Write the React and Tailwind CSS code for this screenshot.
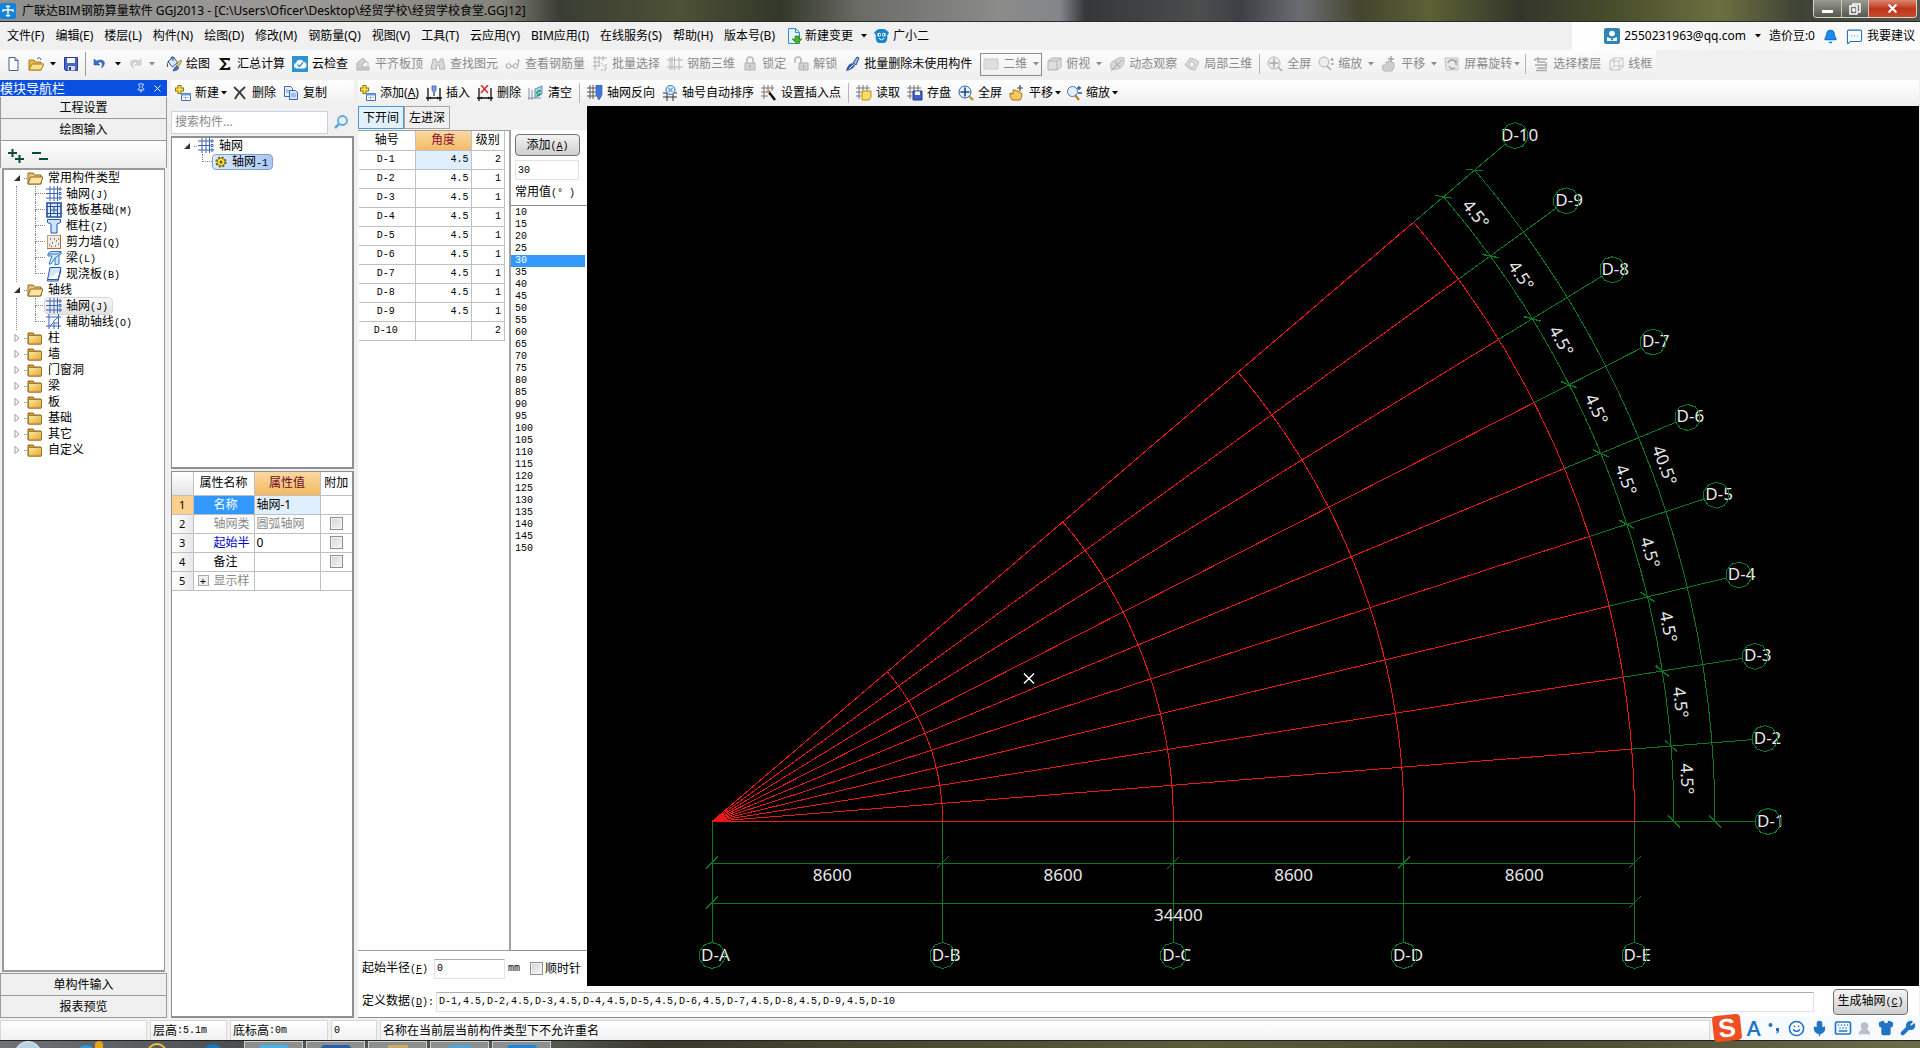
import React, { useState } from 'react';
import { Bell, Keyboard, MessageSquareMore, Mic, Pin, Shirt, Smile, UserRound, Wrench, X } from 'lucide-react';

const MONO = "font-['Liberation_Mono','Noto_Sans_CJK_SC',monospace] text-[10px]";

const folderTab = 'M1 3h5l1.500 2H14v9H1z';

const ICONS = {
    newFile: <><path d="M4 1.500h6l3 3v10H4z" fill="#fff" stroke="#3f5f93" /><path d="M10 1.500v3h3" fill="#c8d8ef" stroke="#3f5f93" /></>,
    open: <><path d="M1 4h5l1 2h6v8H1z" fill="#e6b84c" stroke="#a87a1c" /><path d="M1 14l3-6h12l-3 6z" fill="#fbe08c" stroke="#a87a1c" /><path d="M9 3q3-3 4 1" fill="none" stroke="#2f66b8" /></>,
    save: <><path d="M1.500 1.500h13v13h-12l-1-1z" fill="#4565c8" stroke="#263c8c" /><path d="M4 2h8v5H4z" fill="#f3f6ff" /><path d="M5 10h7v4.500H5z" fill="#d5ddf2" /><path d="M6 11h2v3H6z" fill="#263c8c" /></>,
    undo: <path d="M2 3v6h6L5.800 7C9 4.500 11.500 6.500 9.500 12 15 8 12.500 1.500 4.300 5z" fill="#3a6fd0" stroke="#1f4b9f" strokeWidth=".5" />,
    redo: <path d="M14 3v6H8l2.200-2C7 4.500 4.500 6.500 6.500 12 1 8 3.500 1.500 11.700 5z" fill="#d6d6d6" stroke="#b4b4b4" strokeWidth=".5" />,
    draw: <><path d="M2 5.500L7.500 1l4 5.500-5 4.500z" fill="#dbe9fb" stroke="#2a4f85" /><path d="M3 5q-2.500 2-1.500 6" fill="none" stroke="#2a4f85" /><path d="M5 3Q5 0 7 1v4" fill="none" stroke="#2a4f85" /><path d="M12 6l3-2 1 1-3 5-3 1z" fill="#e8c66a" stroke="#6a6040" strokeWidth=".6" /><path d="M7 15q1-4 4-5l2 2q-2 3-6 3z" fill="#3f78cc" stroke="#234a86" strokeWidth=".7" /></>,
    sigma: <path d="M12 4.500V3H4l4.500 5L4 13h8.300v-2" fill="none" stroke="#111" strokeWidth="1.900" />,
    cloudCheck: <><path d="M0 0h16v16H0z" fill="#2e93cf" /><path d="M4.500 12.500a2.800 2.800 0 01-.5-5.500 4 4 0 017.500-1 3.300 3.300 0 01.500 6.500z" fill="#fff" /><path d="M5.500 8.500l2 2 3.500-4" fill="none" stroke="#2e93cf" strokeWidth="1.300" /></>,
    align: <><path d="M2 10V7l6-5 3 3-4 4v2h7v3H2z" fill="#d0d0d0" stroke="#b0b0b0" /><path d="M4 12h9M9 6h4v4" fill="none" stroke="#bcbcbc" /></>,
    binoculars: <path d="M3 3h3v3h4V3h3l2 10H9.500V9h-3v4H1z" fill="#dadada" stroke="#b4b4b4" />,
    glasses: <><circle cx="3.500" cy="10" r="2.300" fill="none" stroke="#a6a6a6" /><circle cx="10.500" cy="10" r="2.300" fill="none" stroke="#a6a6a6" /><path d="M6 10h2M13 9l1-5h-2" fill="none" stroke="#a6a6a6" /></>,
    batch: <><path d="M1 2h14M1 6h7M1 10h7M3 0v14M7 0v10M11 0v5" stroke="#b2b2b2" /><path d="M9 7l5 5M14 8v6H9" stroke="#a8a8a8" fill="none" strokeDasharray="2 1" /></>,
    rebar: <path d="M0 4h16M0 11h16M3 1v13M7.500 1v13M12 1v13M5 1v13" stroke="#b4b4b4" fill="none" />,
    lock: <><path d="M5 7V4a3 3 0 016 0v3" fill="none" stroke="#b8b8b8" strokeWidth="1.600" /><path d="M3 7h10v7H3z" fill="#d3d3d3" stroke="#b0b0b0" /><path d="M8 9v3" stroke="#999" /></>,
    unlock: <><path d="M2 7V4a3 3 0 016 0v3" fill="none" stroke="#b8b8b8" strokeWidth="1.600" /><path d="M6 7h9v7H6z" fill="#d3d3d3" stroke="#b0b0b0" /><path d="M10.500 9v3" stroke="#999" /></>,
    brush: <><path d="M9 7l4-6 2 1-3 7z" fill="#8fb9ec" stroke="#274d84" /><path d="M2 15q1-6 6-8l3 3q-3 4-9 5z" fill="#2f5da8" /><path d="M5 13l4-4" stroke="#e7eef9" /></>,
    cube: <path d="M2 5l4-3h9v9l-4 3H2zM2 5h9v9M11 5l4-3" fill="#dedede" stroke="#b4b4b4" />,
    orbit: <><path d="M2 13q-2-6 4-9 6-4 9-2 1 7-4 10-5 3-9 1z" fill="#d6d6d6" stroke="#bcbcbc" /><path d="M2 15L13 4M6 5q1 4 5 6" fill="none" stroke="#a8a8a8" /></>,
    localCube: <><path d="M1 9l5-7 4 1 5 3-4 8-5-1z" fill="#dcdcdc" stroke="#b8b8b8" /><path d="M7 5l4 3-3 4-3-3z" fill="#f5f5f5" stroke="#b8b8b8" /></>,
    fullGray: <><circle cx="7" cy="7" r="6" fill="#eee" stroke="#b4b4b4" /><path d="M7 2.500v9M2.500 7h9M11 11l4 4" stroke="#a8a8a8" strokeWidth="1.500" /></>,
    zoomGray: <><circle cx="6" cy="6" r="5" fill="#eee" stroke="#b4b4b4" /><path d="M9 10l4 4M14 2v3M12.500 3.500h3M13 8h3" stroke="#a8a8a8" strokeWidth="1.500" /></>,
    handGray: <><path d="M3 15q-3-4-1-6h3V6q4-2 8 1 1 5-2 8z" fill="#cecece" stroke="#b8b8b8" /><path d="M10 0v6M7 3h6" stroke="#9c9c9c" strokeWidth="1.300" /></>,
    rotateGray: <><path d="M1 2h13v12H2z" fill="#e9e9e9" stroke="#c2c2c2" /><path d="M4 7a4 4 0 118 2M12 4v3M5 10q2 4 6 2" fill="none" stroke="#a5a5a5" strokeWidth="1.600" /></>,
    floors: <path d="M2 3h12M4 6h8M2 9h12M4 12h8M3 14.500h11M2 3v2M13 6v7M5 1v4" stroke="#a8a8a8" fill="none" strokeWidth="1.300" />,
    wire: <path d="M2 5l4-3h9v9l-4 3H2zM2 5h9v9M11 5l4-3M6 2v8h9M2 14l4-4" fill="none" stroke="#c2c2c2" />,
    addItem: <><path d="M4.500 0v9M0 4.500h9" stroke="#8f7508" strokeWidth="4" /><path d="M4.500 1v7M1 4.500h7" stroke="#ffe14d" strokeWidth="2" /><path d="M6.500 8.500h9v7h-9z" fill="#fff" stroke="#3f6fba" /><path d="M6.500 9.500h9" stroke="#6e9ade" strokeWidth="2" /><path d="M8 12.500h6M10.500 10v5" stroke="#a7c2ea" /></>,
    cross: <path d="M2 2q6 5 11 12M13 2Q6 8 3 14" fill="none" stroke="#3b3b3b" strokeWidth="1.900" />,
    copy: <><path d="M1.500 1.500h6l2 2v8h-8z" fill="#e9f1fd" stroke="#3767b1" /><path d="M6.500 5.500h6l2 2v7h-8z" fill="#d5e4fa" stroke="#3767b1" /><path d="M3 5h3M3 7h3M8 9h5M8 11h5" stroke="#6f97d4" /></>,
    insert: <><path d="M2 3v13M14 3v13M0 13h16" stroke="#111" strokeWidth="1.300" fill="none" /><path d="M6 1h4v4l-2 3-2-3z" fill="#7f9fe0" stroke="#2b4b98" strokeWidth=".7" /><path d="M8 8v3" stroke="#111" /><path d="M3 13l2-1.500v3zM13 13l-2-1.500v3z" fill="#111" /></>,
    remove: <><path d="M2 3v13M14 3v13M0 13h16" stroke="#111" strokeWidth="1.300" /><path d="M4 0l7 8M11 0L4 8" stroke="#e22525" strokeWidth="1.500" /><path d="M3 13l2-1.500v3zM13 13l-2-1.500v3z" fill="#111" /></>,
    clear: <><path d="M1 3v12M4 5v10M0 13h13" stroke="#8292a8" /><path d="M7 4l7-3v8l-7 4z" fill="#a9cdf0" stroke="#5f94c8" /><path d="M9 9q0-4 4-3M12 8q0 3-3 2" fill="none" stroke="#1b9b3b" strokeWidth="1.500" /></>,
    flip: <><path d="M0 3h14M0 7h9M0 11h9M3 0v14M6 0v14" stroke="#555" /><path d="M9 0v10l3 5 3-5V0z" fill="#3f77d6" stroke="#2453a6" strokeWidth=".6" /></>,
    sort: <><path d="M1 8h14M1 12h14M5 8v8M11 8v8" stroke="#333" /><circle cx="8.500" cy="5" r="4.500" fill="#d7ecfb" stroke="#2a78bd" /><path d="M6.500 3l4 4M10.500 3l-4 4" stroke="#2a78bd" /></>,
    setPoint: <><path d="M0 3h13M0 7h7M0 11h7M3 0v14M7 0v6M11 0v6" stroke="#777" /><path d="M7 6l7 9" stroke="#111" strokeWidth="2.500" /><path d="M6 5l2 3" stroke="#e2b03c" strokeWidth="2" /></>,
    read: <><path d="M0 3h14M0 7h7M0 11h5M3 0v14M7 0v6M11 0v6" stroke="#777" /><path d="M6 7l2-1h7v6l-2 3H6z" fill="#f9dc63" stroke="#bd911d" /></>,
    store: <><path d="M0 3h14M0 7h7M0 11h5M3 0v14M7 0v6M11 0v6" stroke="#777" /><path d="M6 6h9v9H6z" fill="#4362c6" stroke="#22388b" /><path d="M8 6.500h5V10H8z" fill="#fff" /></>,
    full: <><circle cx="7" cy="7" r="6" fill="#e5f0fd" stroke="#31609d" /><path d="M7 2.500v9M2.500 7h9" stroke="#1c4584" strokeWidth="1.600" /><path d="M11.500 11.500l3.500 3.500" stroke="#c78a2b" strokeWidth="2.200" /></>,
    hand: <><path d="M3 15q-3-4-2-7l3 1V5q2-1 3 1 2-1 3 1 2 0 3 2 0 4-2 6z" fill="#f4c95d" stroke="#a4741b" /><path d="M11 0v6M8 3h6" stroke="#3d4754" strokeWidth="1.200" /></>,
    zoom: <><circle cx="6.500" cy="6.500" r="5" fill="#e5f0fd" stroke="#4a79b4" /><path d="M9 10l4 5" stroke="#b98131" strokeWidth="2.200" /><path d="M13 1v4M11 3h4M12 8h4" stroke="#2157a4" strokeWidth="1.300" /></>,
    change: <><path d="M2.500.500h7l4 4v11h-11z" fill="#e9f5fe" stroke="#3489c9" /><path d="M9.500.500v4h4" fill="none" stroke="#3489c9" /><path d="M9 8h4v3h3l-5 5-5-5h3z" fill="#44b622" stroke="#267d0c" strokeWidth=".6" /></>,
    mascot: <><path d="M0 4q4-5 8-4 4-1 8 4l-2 3q1 6-3 8H5Q1 13 2 7z" fill="#1687cb" /><circle cx="5.500" cy="6" r="2" fill="#fff" /><circle cx="10.500" cy="6" r="2" fill="#fff" /><circle cx="6" cy="6" r=".8" fill="#123" /><circle cx="10" cy="6" r=".8" fill="#123" /><path d="M5 10q3 3 6 0" fill="none" stroke="#fff" /></>,
    user: <><rect width="16" height="16" rx="2" fill="#2e86b8" /><circle cx="8" cy="5.500" r="2.800" fill="#fff" /><path d="M3 13V9l5 2 5-2v4z" fill="#fff" /><path d="M6.500 11h3L8 13z" fill="#2e86b8" /></>,
    folder: <><path d={folderTab} fill="#d6a02e" stroke="#8b6720" /><path d="M1.500 5.500h13v8.500h-13z" fill="url(#gold)" stroke="#a67a22" /></>,
    folderOpen: <><path d={folderTab} fill="#eac771" stroke="#8b6720" /><path d="M1 14l2.500-7H16l-2.500 7z" fill="#fbe3a0" stroke="#8b6720" /></>,
    grid: <><path d="M4 0v15M8 0v15M0 3h12M0 7.500h12M0 12h12M11.500 0v15" stroke="#3a62b3" fill="none" /><path d="M13 2h2v2h-2zM13 6.500h2v2h-2zM13 11h2v2h-2z" fill="none" stroke="#3a62b3" /></>,
    raft: <><path d="M1 1h14v14H1z" fill="#dce9fb" stroke="#234f98" strokeWidth="1.600" /><path d="M4.500 1v14M11.500 1v14M1 4.500h14M1 11.500h14M8 4v8M4 8h8" stroke="#234f98" /></>,
    column: <path d="M1.500 1.500h13v3L11 6v9H5V6L1.500 4.500z" fill="#cfe2fb" stroke="#2358b5" />,
    wall: <><path d="M1.500 1.500h13v13h-13z" fill="#efeae4" stroke="#c49b7c" /><path d="M14.500 1v14M1 14.500h14" stroke="#c9632b" /><path d="M3 11h1M6 9h1M9 12h1M12 10h1M5 12.500h1M10 7h1M4 5h1M8 5h1M12 5h1" stroke="#333" /></>,
    beam: <><path d="M2 3.500L5 1.500h10v2.500l-2 1v9L9 15V8L5 14H3l3-8H2z" fill="#cfe7fb" stroke="#2b7ac4" /><path d="M2 4h9l4-2M9 8l4-3" fill="none" stroke="#2b7ac4" /></>,
    slab: <path d="M4 1.500h11l-3 12H1.500z M1.500 13.500v1.500H12l3-11" fill="#d4e5fb" stroke="#2358b5" />,
    auxAxis: <path d="M3 0v15M12.500 0v15M0 3h15M0 12h15M7 8l5-5M8 15V9h4M4 12l4-4" stroke="#3a62b3" fill="none" />,
    gear: <><circle cx="8" cy="8" r="6" fill="none" stroke="#6f6200" strokeWidth="3" strokeDasharray="2.700 2" /><circle cx="8" cy="8" r="5" fill="#ffe93a" stroke="#7b6a00" /><circle cx="8" cy="8" r="2" fill="#3d3500" /><circle cx="8" cy="8" r=".8" fill="#ffe93a" /></>,
    search: <><circle cx="9.500" cy="6.500" r="4.500" fill="#e6f5fd" stroke="#5ba9dd" strokeWidth="1.800" /><path d="M6 10l-4 4" stroke="#5ba9dd" strokeWidth="2.500" /></>,
    plane: <path d="M1 3h14v10H1z" fill="#dedede" stroke="#cacaca" />,
};

function Icon({ name, className = 'size-4' }) {
    return <svg viewBox="0 0 16 16" className={`shrink-0 ${className}`} aria-hidden="true">{ICONS[name]}</svg>;
}

function Caret({ className = '' }) {
    return <svg viewBox="0 0 6 4" className={`w-[6px] h-1 shrink-0 fill-current ${className}`} aria-hidden="true"><path d="M0 0h6L3 3.500z" /></svg>;
}

function Tool({ icon, label, off, menu, tight, hotkey }) {
    return (
        <button className={`flex items-center gap-1 whitespace-nowrap ${off ? 'text-[#8a8a8a]' : 'text-black'}`}>
            <Icon name={icon} />
            <span>{label}{hotkey && <>(<u>{hotkey}</u>)</>}</span>
            {menu && <Caret className={tight ? '-ml-[2px] -mr-[2px]' : 'ml-[2px]'} />}
        </button>
    );
}

function Divider() {
    return <span className="w-px h-5 bg-[#b5b5b5] shrink-0" />;
}

const MENUS = ['文件(F)', '编辑(E)', '楼层(L)', '构件(N)', '绘图(D)', '修改(M)', '钢筋量(Q)', '视图(V)', '工具(T)', '云应用(Y)', 'BIM应用(I)', '在线服务(S)', '帮助(H)', '版本号(B)'];

function TitleBar() {
    return (
        <header className="flex justify-between h-[22px] shrink-0 border-b border-[#2a2a2a] bg-[linear-gradient(90deg,#8f8f8d_0px,#9b9a96_300px,#84837c_500px,#3a3d33_560px,#4d5136_680px,#33372a_780px,#6b6c66_860px,#8b8b8a_1000px,#84858a_1060px,#35373b_1085px,#4c4d4d_1200px,#3e4046_1240px,#6c6d73_1300px,#44452e_1360px,#5c6136_1430px,#33362a_1520px,#4a4f2d_1620px,#6c7040_1720px,#3f4237_1800px,#55584a_1920px)]">
            <div className="flex items-center gap-[6px] min-w-0">
                <svg viewBox="0 0 16 16" className="size-4 shrink-0"><rect width="16" height="16" rx="2" fill="#1283d8" /><path d="M8 3v10M3 9V7h10v2M6 4q2-2 4 0M6 12q2 2 4 0" fill="none" stroke="#fff" strokeWidth="1.300" /></svg>
                <h1 className="truncate">广联达BIM钢筋算量软件 GGJ2013 - [C:\Users\Oficer\Desktop\经贸学校\经贸学校食堂.GGJ12]</h1>
            </div>
            <div className="flex h-[18px] mr-[3px] shrink-0 border border-t-0 border-[#d5d5cf] rounded-b-sm overflow-hidden">
                <button aria-label="最小化" className="w-7 flex items-end justify-center pb-1 bg-gradient-to-b from-[#9a9b92] to-[#55584d] border-r border-[#c8c8c0]"><span className="w-[11px] h-[3px] bg-white" /></button>
                <button aria-label="还原" className="w-[27px] flex items-center justify-center bg-gradient-to-b from-[#9a9b92] to-[#55584d] border-r border-[#c8c8c0]">
                    <svg viewBox="0 0 12 12" className="size-3" fill="none" stroke="#fff" strokeWidth="1.500"><path d="M4 3V1h7v8H9M1 3h7v8H1zM4 6h1.500v2H4z" /></svg>
                </button>
                <button aria-label="关闭" className="w-[47px] flex items-center justify-center bg-gradient-to-b from-[#d9866f] via-[#bd3519] to-[#c8492c]"><X size={13} strokeWidth={4} color="#fff" /></button>
            </div>
        </header>
    );
}

function MenuBar() {
    return (
        <nav className="flex items-center justify-between h-7 shrink-0 pl-[7px] bg-[#f0f0f0]">
            <div className="flex items-center gap-[11px] whitespace-nowrap">
                {MENUS.map(m => <button key={m}>{m}</button>)}
                <button className="flex items-center gap-[3px]"><Icon name="change" />新建变更<Caret className="ml-[5px]" /></button>
                <button className="flex items-center gap-1 -ml-1"><Icon name="mascot" className="size-[15px]" />广小二</button>
            </div>
            <div className="flex items-center h-full pl-8 pr-[5px] whitespace-nowrap bg-gradient-to-r from-white via-[#f3f3f3] to-white">
                <button className="flex items-center gap-1"><Icon name="user" />2550231963@qq.com<Caret className="ml-[5px]" /></button>
                <span className="ml-2">造价豆:0</span>
                <button aria-label="通知" className="ml-2"><Bell size={15} fill="#1b8cf0" color="#1476d0" /></button>
                <button className="ml-2 flex items-center gap-1"><MessageSquareMore size={17} color="#1f72bd" strokeWidth={1.5} />我要建议</button>
            </div>
        </nav>
    );
}

function MainToolbar() {
    return (
        <div className="flex h-[30px] shrink-0 bg-[#f0f0f0]">
            <div className="flex items-center gap-[7px] pl-[5px] pr-1 h-[28px] bg-gradient-to-b from-[#fdfdfd] to-[#eee]">
                <div className="flex items-center w-[154px] shrink-0">
                    <button aria-label="新建工程"><Icon name="newFile" /></button>
                    <button aria-label="打开" className="ml-[7px] flex items-center gap-[6px]"><Icon name="open" /><Caret /></button>
                    <button aria-label="保存" className="ml-[7px]"><Icon name="save" /></button>
                    <span className="w-px h-6 mx-[6px] bg-[#9a9a9a]" />
                    <button aria-label="撤销" className="flex items-center gap-[7px]"><Icon name="undo" /><Caret /></button>
                    <button aria-label="恢复" className="ml-[6px] flex items-center gap-[6px] text-[#8a8a8a]"><Icon name="redo" /><Caret /></button>
                </div>
                <Tool icon="draw" label="绘图" />
                <Tool icon="sigma" label="汇总计算" />
                <Tool icon="cloudCheck" label="云检查" />
                <Tool icon="align" label="平齐板顶" off />
                <Tool icon="binoculars" label="查找图元" off />
                <Tool icon="glasses" label="查看钢筋量" off />
                <Tool icon="batch" label="批量选择" off />
                <Tool icon="rebar" label="钢筋三维" off />
                <Tool icon="lock" label="锁定" off />
                <Tool icon="unlock" label="解锁" off />
                <Tool icon="brush" label="批量删除未使用构件" />
                <label className="flex items-center gap-1 w-[62px] h-[23px] ml-px px-[2px] border border-[#8c8c8c] text-[#8a8a8a]">
                    <Icon name="plane" />
                    <select aria-label="视图模式" className="appearance-none w-[26px] outline-none"><option>二维</option><option>三维</option></select>
                    <Caret />
                </label>
                <div className="flex items-center gap-[7px] -ml-[3px]">
                    <Tool icon="cube" label="俯视" off menu />
                    <Tool icon="orbit" label="动态观察" off />
                    <Tool icon="localCube" label="局部三维" off />
                    <Divider />
                    <Tool icon="fullGray" label="全屏" off />
                    <Tool icon="zoomGray" label="缩放" off menu />
                    <Tool icon="handGray" label="平移" off menu />
                    <Tool icon="rotateGray" label="屏幕旋转" off menu tight />
                    <Divider />
                    <Tool icon="floors" label="选择楼层" off />
                    <Tool icon="wire" label="线框" off />
                </div>
            </div>
        </div>
    );
}

const TREE = [
    {
        label: '常用构件类型', children: [
            { icon: 'grid', label: '轴网', key: 'J' },
            { icon: 'raft', label: '筏板基础', key: 'M' },
            { icon: 'column', label: '框柱', key: 'Z' },
            { icon: 'wall', label: '剪力墙', key: 'Q' },
            { icon: 'beam', label: '梁', key: 'L' },
            { icon: 'slab', label: '现浇板', key: 'B' },
        ],
    },
    {
        label: '轴线', children: [
            { icon: 'grid', label: '轴网', key: 'J', selected: true },
            { icon: 'auxAxis', label: '辅助轴线', key: 'O' },
        ],
    },
    ...['柱', '墙', '门窗洞', '梁', '板', '基础', '其它', '自定义'].map(label => ({ label })),
];

function Elbow({ last }) {
    return (
        <span className="flex flex-col w-[10px] h-4 shrink-0">
            <span className="h-2 border-l border-b border-dotted border-[#888]" />
            {!last && <span className="h-2 border-l border-dotted border-[#888]" />}
        </span>
    );
}

function Arrow({ open }) {
    return (
        <svg viewBox="0 0 6 8" className="w-[6px] h-2 shrink-0">
            {open ? <path d="M6 1v6H0z" fill="#333" /> : <path d="M1 .500l4 3.500-4 3.500z" fill="#fff" stroke="#999" />}
        </svg>
    );
}

function NavButton({ children }) {
    return <button className="h-[22px] shrink-0 border border-t-0 border-[#9a9a9a] bg-[#f0f0f0] leading-4">{children}</button>;
}

function ModulePanel() {
    return (
        <aside className="flex flex-col w-[167px] shrink-0">
            <div className="flex items-center h-4 shrink-0 mb-px bg-[#0a50e0] text-white">
                <h2 className="flex-1 text-[13px] leading-4">模块导航栏</h2>
                <button aria-label="固定" className="mr-[6px]"><Pin size={10} /></button>
                <button aria-label="关闭面板" className="mr-1"><X size={11} /></button>
            </div>
            <NavButton>工程设置</NavButton>
            <NavButton>绘图输入</NavButton>
            <div className="flex items-center gap-2 h-[27px] shrink-0 pl-[7px] pt-[3px] bg-gradient-to-b from-white to-[#ececec] border-x border-[#9a9a9a]">
                <button aria-label="全部展开"><svg viewBox="0 0 16 16" className="size-4"><path d="M0 5h9M4.500 1v8M7 11h9M11.500 7v8" stroke="#0d4a40" strokeWidth="2" /></svg></button>
                <button aria-label="全部折叠"><svg viewBox="0 0 16 16" className="size-4"><path d="M0 5h9M7 11h9" stroke="#0d4a40" strokeWidth="2" /></svg></button>
            </div>
            <ul className="flex-1 mx-[2px] pl-[10px] bg-white border-2 border-[#9a9a9a] border-r overflow-hidden">
                {TREE.map(group => (
                    <li key={group.label}>
                        <button className="flex items-center h-4 whitespace-nowrap">
                            <Arrow open={!!group.children} />
                            <span className="w-[3px] ml-1 border-t border-dotted border-[#888]" />
                            <Icon name={group.children ? 'folderOpen' : 'folder'} />
                            <span className="ml-[5px]">{group.label}</span>
                        </button>
                        {group.children && (
                            <ul className="ml-[2px] border-l border-dotted border-[#888]">
                                {group.children.map((item, i) => (
                                    <li key={item.label} className="flex items-center h-4 pl-[18px]">
                                        <Elbow last={i === group.children.length - 1} />
                                        <button className={`flex items-center gap-[4px] h-4 pl-px pr-1 whitespace-nowrap ${item.selected ? 'bg-gradient-to-b from-[#fafafa] to-[#e2e2e2] rounded-sm outline-1 outline-[#d6d6d6]' : ''}`}>
                                            <Icon name={item.icon} />
                                            <span>{item.label}<span className={MONO}>({item.key})</span></span>
                                        </button>
                                    </li>
                                ))}
                            </ul>
                        )}
                    </li>
                ))}
            </ul>
            <div className="flex flex-col shrink-0 mt-px border-t border-[#9a9a9a]">
                <NavButton>单构件输入</NavButton>
                <NavButton>报表预览</NavButton>
            </div>
        </aside>
    );
}

const PROPERTIES = [
    { name: '名称', value: '轴网-1' },
    { name: '轴网类', value: '圆弧轴网', tone: 'text-[#8a8a8a]', extra: true },
    { name: '起始半', value: '0', tone: 'text-[#0000c8]', extra: true },
    { name: '备注', value: '', extra: true },
    { name: '显示样', value: '', tone: 'text-[#8a8a8a]', expand: true },
];

const CHECKBOX = 'appearance-none block size-[13px] shrink-0 border border-[#8f8f8f] bg-gradient-to-br from-[#d4d4d4] to-[#f6f6f6] shadow-[inset_0_0_0_1px_#f4f4f4] checked:bg-[#3399ff]';

function ComponentPanel() {
    return (
        <section className="flex flex-col w-[183px] shrink-0">
            <div className="flex items-center gap-[7px] h-[26px] shrink-0 pl-1 bg-gradient-to-b from-white to-[#eee]">
                <Tool icon="addItem" label="新建" menu tight />
                <Tool icon="cross" label="删除" />
                <Tool icon="copy" label="复制" />
            </div>
            <div className="flex items-center h-[30px] shrink-0 pt-[2px]">
                <input aria-label="搜索构件" placeholder="搜索构件..." className="w-[157px] h-[23px] pl-[3px] pb-[2px] bg-white border border-[#ccd3e0] outline-none placeholder:text-[#8a8a8a]" />
                <button aria-label="搜索" className="ml-[5px]"><Icon name="search" /></button>
            </div>
            <ul className="h-[333px] shrink-0 pl-3 bg-white border-2 border-[#8f8f8f] border-l">
                <li className="flex items-center h-4">
                    <Arrow open />
                    <span className="w-[3px] ml-1 mr-px border-t border-dotted border-[#888]" />
                    <Icon name="grid" />
                    <span className="ml-[5px]">轴网</span>
                </li>
                <li className="flex items-center h-4 pl-[18px]">
                    <Elbow last />
                    <button className="flex items-center gap-[5px] h-4 pl-[2px] pr-1 rounded-sm border border-[#7da2ce] bg-gradient-to-r from-[#dcebfc] to-[#a9c8f5]">
                        <Icon name="gear" className="size-3" /><span>轴网<span className={MONO}>-1</span></span>
                    </button>
                </li>
            </ul>
            <div className="flex-1 mt-[2px] bg-white border border-[#8f8f8f] border-r-2 border-b-2">
                <table className="w-full table-fixed border-collapse leading-4">
                    <colgroup><col className="w-[21px]" /><col className="w-[61px]" /><col className="w-[66px]" /><col /></colgroup>
                    <thead>
                        <tr className="h-[23px]">
                            <th className="border border-t-0 border-l-0 border-[#c0c0c0] bg-gradient-to-b from-white to-[#e4e4e4]" />
                            <th className="p-0 font-normal border border-t-0 border-[#c0c0c0]">属性名称</th>
                            <th className="p-0 font-normal border border-t-0 border-[#c0c0c0] text-[#6b0a2a] bg-gradient-to-b from-[#f9d9a0] to-[#f2b95e]">属性值</th>
                            <th className="p-0 font-normal border border-t-0 border-r-0 border-[#c0c0c0]">附加</th>
                        </tr>
                    </thead>
                    <tbody>
                        {PROPERTIES.map((p, i) => (
                            <tr key={p.name} className="h-[19px]">
                                <td className={`text-center text-[11px] border border-l-0 border-[#c0c0c0] ${i === 0 ? 'bg-[#fbd08c]' : 'bg-gradient-to-r from-white to-[#e8e8e8]'}`}>{i + 1}</td>
                                <td className={`border border-[#c0c0c0] whitespace-nowrap ${i === 0 ? 'bg-[#3399ff] text-white' : p.tone || ''}`}>
                                    <span className="flex items-center">
                                        <span className="w-5 shrink-0 flex justify-center">
                                            {p.expand && <button aria-label="展开" className="flex items-center justify-center size-[11px] mr-px bg-[#f0f0f0] border border-[#aaa] text-black text-[11px] leading-none">+</button>}
                                        </span>{p.name}
                                    </span>
                                </td>
                                <td className={`pl-[2px] border border-[#c0c0c0] whitespace-nowrap ${i === 0 ? 'bg-[#e0effd]' : ''} ${i === 1 ? 'text-[#8a8a8a]' : ''}`}>{p.value}</td>
                                <td className="border border-r-0 border-[#c0c0c0]">
                                    {p.extra && <input type="checkbox" aria-label={`${p.name}附加`} className={`${CHECKBOX} mx-auto`} />}
                                </td>
                            </tr>
                        ))}
                    </tbody>
                </table>
            </div>
        </section>
    );
}

const AXES = Array.from({ length: 10 }, (_, i) => ({
    name: `D-${i + 1}`,
    angle: i < 9 ? '4.5' : '',
    level: i === 0 || i === 9 ? 2 : 1,
}));

const COMMON = [...Array.from({ length: 28 }, (_, i) => 10 + i * 5), 150];

function AxisTable() {
    const [tab, setTab] = useState('下开间');
    return (
        <div className="flex flex-col w-[153px] shrink-0">
            <div className="flex h-6 shrink-0">
                {['下开间', '左进深'].map(t => (
                    <button
                        key={t}
                        onClick={() => setTab(t)}
                        className={`w-[46px] h-[23px] border ${t === tab ? 'border-[#4a98d8] bg-[#e3f1fd]' : 'border-[#a5a5a5] bg-[#f0f0f0]'}`}
                    >{t}</button>
                ))}
            </div>
            <div className="flex-1 bg-white border-y border-r-2 border-[#a0a0a0] pl-px">
                <table className="w-[146px] table-fixed border-collapse leading-4">
                    <colgroup><col className="w-[56px]" /><col className="w-[56px]" /><col /></colgroup>
                    <thead>
                        <tr className="h-[19px]">
                            <th className="p-0 font-normal border-b border-r border-[#c0c0c0]">轴号</th>
                            <th className="p-0 font-normal border-b border-r border-[#c0c0c0] text-[#8a1030] bg-gradient-to-b from-[#f9d9a0] to-[#f2bb66]">角度</th>
                            <th className="p-0 font-normal border-b border-r border-[#c0c0c0]">级别</th>
                        </tr>
                    </thead>
                    <tbody className={MONO}>
                        {AXES.map((a, i) => (
                            <tr key={a.name} className="h-[19px]">
                                <td className="p-0 pr-[2px] text-center border-b border-r border-[#c0c0c0]">{a.name}</td>
                                <td className={`p-0 pr-[2px] text-right border-b border-r border-[#c0c0c0] ${i === 0 ? 'bg-[#e0effd]' : ''}`}>{a.angle}</td>
                                <td className="p-0 pr-[3px] text-right border-b border-r border-[#c0c0c0]">{a.level}</td>
                            </tr>
                        ))}
                    </tbody>
                </table>
            </div>
        </div>
    );
}

const PUSH = 'border border-[#707070] rounded-sm bg-gradient-to-b from-[#f4f4f4] to-[#cfcfcf] whitespace-nowrap';

function CommonValues() {
    const [value, setValue] = useState(30);
    return (
        <div className="flex flex-col flex-1 pt-6">
            <div className="flex flex-col h-[75px] shrink-0 pl-1 pt-1 bg-white">
                <button className={`w-[65px] h-[22px] shrink-0 ${PUSH}`}>添加<span className={MONO}>(<u>A</u>)</span></button>
                <input aria-label="角度值" value={value} onChange={e => setValue(e.target.value)} className={`w-[64px] h-5 mt-1 pl-[2px] shrink-0 border border-[#e2e3ea] outline-none ${MONO}`} />
                <span className="mt-1 leading-4">常用值<span className={MONO}>(° )</span></span>
            </div>
            <ul role="listbox" aria-label="常用值" className={`flex-1 pt-px bg-white border-y border-[#8f8f8f] leading-3 ${MONO}`}>
                {COMMON.map(v => (
                    <li
                        key={v}
                        role="option"
                        aria-selected={v === Number(value)}
                        onClick={() => setValue(v)}
                        className={`h-3 mr-[2px] pl-1 leading-3 ${v === Number(value) ? 'bg-[#3399ff] text-white' : ''}`}
                    >{v}</li>
                ))}
            </ul>
        </div>
    );
}

// canvas geometry, 8600mm per bay
const OX = 125;
const OY = 715;
const BAY = 230.65;
const STEP = 4.5;
const R_RED = BAY * 4;
const R_DIM1 = 962;
const R_DIM2 = 1003;
const R_END = 1044;
const R_BUBBLE = 1056;
const GREEN = '#0c7a22';
const RED = '#ee1717';

const polar = (r, deg) => {
    const a = (deg * Math.PI) / 180;
    return [OX + r * Math.cos(a), OY - r * Math.sin(a)];
};

function Arc({ r, color }) {
    const [x, y] = polar(r, STEP * 9);
    return <path d={`M${OX + r} ${OY}A${r} ${r} 0 0 0 ${x} ${y}`} fill="none" stroke={color} />;
}

function Radial({ from, to, deg, color }) {
    const [x1, y1] = polar(from, deg);
    const [x2, y2] = polar(to, deg);
    return <line x1={x1} y1={y1} x2={x2} y2={y2} stroke={color} />;
}

function Bubble({ x, y, label }) {
    const points = Array.from({ length: 10 }, (_, i) => {
        const a = (i * 36 * Math.PI) / 180;
        return `${x + 13 * Math.sin(a)},${y - 13 * Math.cos(a)}`;
    }).join(' ');
    return (
        <g>
            <text x={label.length > 3 ? x - 14 : x - 11} y={y + 5} fill="#e8e8e8">{label}</text>
            <polygon points={points} fill="none" stroke={GREEN} shapeRendering="crispEdges" />
        </g>
    );
}

function ArcTick({ r, deg, skew = 0 }) {
    const [x, y] = polar(r, deg);
    return <path d="M-6 -6L6 6" transform={`translate(${x} ${y}) rotate(${-deg + skew})`} stroke={GREEN} />;
}

function ArcText({ r, deg, children }) {
    const [x, y] = polar(r, deg);
    return <text transform={`translate(${x} ${y}) rotate(${90 - deg})`} textAnchor="middle" fill="#e8e8e8">{children}</text>;
}

function AxisCanvas() {
    const lines = AXES.map((_, i) => i * STEP);
    const bays = [0, 1, 2, 3, 4];
    return (
        <div className="flex-1 min-w-0 bg-black">
            <svg viewBox="0 0 1332 879" className="size-full font-['Noto_Sans',sans-serif] text-[17px]" role="img" aria-label="圆弧轴网">
                <g shapeRendering="crispEdges">
                    {lines.map(d => <Radial key={d} from={R_RED} to={R_END} deg={d} color={GREEN} />)}
                    {bays.map(b => <line key={b} x1={OX + b * BAY} x2={OX + b * BAY} y1={OY} y2={836} stroke={GREEN} />)}
                    <path d={`M${OX} 756.500H${OX + R_RED}M${OX} 796.500H${OX + R_RED}`} stroke={GREEN} />
                    {bays.map(b => <path key={b} d="M-6 6L6 -6" transform={`translate(${OX + b * BAY} 756)`} stroke={GREEN} />)}
                    {[0, 4].map(b => <path key={b} d="M-6 6L6 -6" transform={`translate(${OX + b * BAY} 796)`} stroke={GREEN} />)}
                    <Arc r={R_DIM1} color={GREEN} />
                    <Arc r={R_DIM2} color={GREEN} />
                    {lines.map((d, i) => (
                        <g key={d}>
                            {i < 9 && <ArcTick r={R_DIM1} deg={d} />}
                            {i > 0 && <ArcTick r={R_DIM1} deg={d} skew={5} />}
                        </g>
                    ))}
                    <ArcTick r={R_DIM2} deg={0} />
                    <ArcTick r={R_DIM2} deg={40.5} />
                    {lines.map(d => <Radial key={d} from={0} to={R_RED} deg={d} color={RED} />)}
                    {[1, 2, 3, 4].map(b => <Arc key={b} r={b * BAY} color={RED} />)}
                </g>
                {lines.map((d, i) => {
                    const [x, y] = polar(R_BUBBLE, d);
                    return <Bubble key={d} x={x} y={y} label={AXES[i].name} />;
                })}
                {lines.slice(0, 9).map(d => <ArcText key={d} r={970} deg={d + STEP / 2 + 0.25}>4.5°</ArcText>)}
                <ArcText r={1011} deg={20.5}>40.5°</ArcText>
                {[0, 1, 2, 3].map(b => <text key={b} x={OX + (b + 0.5) * BAY + 5} y="774" textAnchor="middle" fill="#e8e8e8">8600</text>)}
                <text x={OX + 2 * BAY + 5} y="814" textAnchor="middle" fill="#e8e8e8">34400</text>
                {['A', 'B', 'C', 'D', 'E'].map((n, b) => <Bubble key={n} x={OX + b * BAY} y={849} label={`D-${n}`} />)}
                <path d="M437 567l10 10M447 567l-10 10" stroke="#fff" strokeWidth="1.500" />
            </svg>
        </div>
    );
}

function AxisEditor() {
    const data = AXES.map(a => (a.angle ? `${a.name},${a.angle}` : a.name)).join(',');
    return (
        <section className="flex flex-col flex-1 min-w-0 mr-px">
            <div className="flex items-center gap-[7px] h-[26px] shrink-0 pl-[2px] bg-gradient-to-b from-white to-[#eee]">
                <Tool icon="addItem" label="添加" hotkey="A" />
                <Tool icon="insert" label="插入" />
                <Tool icon="remove" label="删除" />
                <Tool icon="clear" label="清空" />
                <Divider />
                <Tool icon="flip" label="轴网反向" />
                <Tool icon="sort" label="轴号自动排序" />
                <Tool icon="setPoint" label="设置插入点" />
                <Divider />
                <Tool icon="read" label="读取" />
                <Tool icon="store" label="存盘" />
                <Tool icon="full" label="全屏" />
                <Tool icon="hand" label="平移" menu tight />
                <Tool icon="zoom" label="缩放" menu tight />
            </div>
            <div className="flex flex-1 min-h-0">
                <div className="flex flex-col w-[229px] shrink-0">
                    <div className="flex flex-1 min-h-0">
                        <AxisTable />
                        <CommonValues />
                    </div>
                    <div className="flex items-center h-[35px] shrink-0 pl-1 bg-white whitespace-nowrap">
                        <label htmlFor="radius" className="w-[72px]">起始半径<span className={MONO}>(<u>F</u>)</span></label>
                        <input id="radius" defaultValue="0" className={`w-[71px] h-5 pl-[2px] border border-[#e2e3ea] border-t-[#abadb3] outline-none ${MONO}`} />
                        <span className={`ml-[3px] ${MONO}`}>mm</span>
                        <label className="flex items-center gap-[2px] ml-[10px]"><input type="checkbox" className={CHECKBOX} />顺时针</label>
                    </div>
                </div>
                <AxisCanvas />
            </div>
            <div className="flex items-center h-8 shrink-0 pl-1 pr-[11px] bg-white border-b border-[#8f8f8f] whitespace-nowrap">
                <label htmlFor="definition" className="w-[74px]">定义数据<span className={MONO}>(<u>D</u>):</span></label>
                <input id="definition" defaultValue={data} className={`flex-1 min-w-0 h-5 pl-[2px] border border-[#e2e3ea] border-t-[#abadb3] outline-none ${MONO}`} />
                <button className={`w-[75px] h-[26px] ml-[19px] ${PUSH}`}>生成轴网<span className={MONO}>(<u>C</u>)</span></button>
            </div>
        </section>
    );
}

function StatusBar() {
    const cell = 'flex items-center h-5 px-[2px] border border-[#d7d7d7] border-b-0 bg-gradient-to-b from-white to-[#f0f0f0] whitespace-nowrap shrink-0';
    return (
        <footer className="flex items-end gap-[3px] h-[22px] shrink-0 bg-[#f0f0f0]">
            <span className={`${cell} w-[147px]`} />
            <span className={`${cell} w-[77px]`}>层高<span className={MONO}>:5.1m</span></span>
            <span className={`${cell} w-[98px]`}>底标高<span className={MONO}>:0m</span></span>
            <span className={`${cell} w-[46px] ${MONO}`}>0</span>
            <span className={`${cell} flex-1`}>名称在当前层当前构件类型下不允许重名</span>
            <div className="flex items-center justify-between w-[207px] h-6 pr-1 shrink-0 bg-[#f7fbff] text-[#1f74c4]">
                <span className="flex items-center justify-center w-7 h-[26px] rounded-sm bg-[#ee4f22] text-white font-bold font-['Liberation_Sans',sans-serif] text-[26px] leading-none -rotate-6">S</span>
                <span className="font-['Lato',sans-serif] font-bold text-[20px] leading-none">A</span>
                <svg viewBox="0 0 16 14" className="w-4 h-[14px]" fill="currentColor"><circle cx="4.500" cy="4" r="2" /><path d="M10 7h3v3q0 2-3 3 1-1 1-3h-1z" /></svg>
                <Smile size={17} strokeWidth={2.200} />
                <Mic size={17} fill="currentColor" />
                <Keyboard size={18} strokeWidth={2.200} />
                <UserRound size={15} fill="#b9bfca" color="#b9bfca" />
                <Shirt size={16} fill="currentColor" />
                <Wrench size={16} fill="currentColor" />
            </div>
        </footer>
    );
}

function TaskBar() {
    const tile = 'flex justify-center h-2 border-x border-t border-[#d0d0cc] bg-[#8d8f8e] pt-[3px]';
    return (
        <div className="flex h-2 shrink-0 overflow-hidden border-t border-[#222] bg-[linear-gradient(90deg,#6f7376_0px,#4b4e50_240px,#55584e_560px,#39382c_650px,#5b5d38_1200px,#46482f_1500px,#6a6c47_1920px)]">
            <span className="w-7 h-7 ml-[14px] rounded-full bg-[#b9d3e6] border border-[#e8eef2]" />
            <span className="w-5 h-5 ml-[34px] mt-1 rounded-full bg-[#2d9be0]" />
            <span className="w-2 h-3 -ml-px rounded-full bg-[#e8a21c]" />
            <span className="w-5 h-5 ml-11 mt-[2px] rounded-full border-2 border-[#eec13a]" />
            <span className="w-5 h-5 ml-9 mt-[3px] rounded-full bg-[#1777c2]" />
            <div className="flex gap-[3px] ml-[21px]">
                <span className={`${tile} w-[59px]`}><span className="w-[30px] h-1 rounded-t-sm bg-[#41b3ee]" /></span>
                <span className={`${tile} w-[59px]`}><span className="w-[30px] h-1 rounded-t-sm bg-[#2361ad]" /></span>
                <span className={`${tile} w-[59px]`}><span className="w-5 h-1 bg-[#c9ab61]" /></span>
                <span className={`${tile} w-[59px]`}><span className="w-6 h-1 rounded-t-full bg-[#4ca6d9]" /></span>
                <span className={`${tile} w-[59px]`}><span className="w-[30px] h-1 rounded-t-sm bg-[#1b87df]" /></span>
            </div>
        </div>
    );
}

export default function App() {
    return (
        <div className="flex flex-col h-screen min-w-0 overflow-hidden bg-[#f0f0f0] text-black text-xs font-['Noto_Sans','Noto_Sans_CJK_SC',sans-serif]">
            <svg className="absolute size-0" aria-hidden="true">
                <defs><linearGradient id="gold" x2="1" y2="1"><stop offset="0" stopColor="#fdeca6" /><stop offset="1" stopColor="#e0a729" /></linearGradient></defs>
            </svg>
            <TitleBar />
            <MenuBar />
            <MainToolbar />
            <main className="flex flex-1 min-h-0">
                <ModulePanel />
                <div className="flex flex-1 min-w-0 gap-1 pl-1">
                    <ComponentPanel />
                    <AxisEditor />
                </div>
            </main>
            <StatusBar />
            <TaskBar />
        </div>
    );
}
